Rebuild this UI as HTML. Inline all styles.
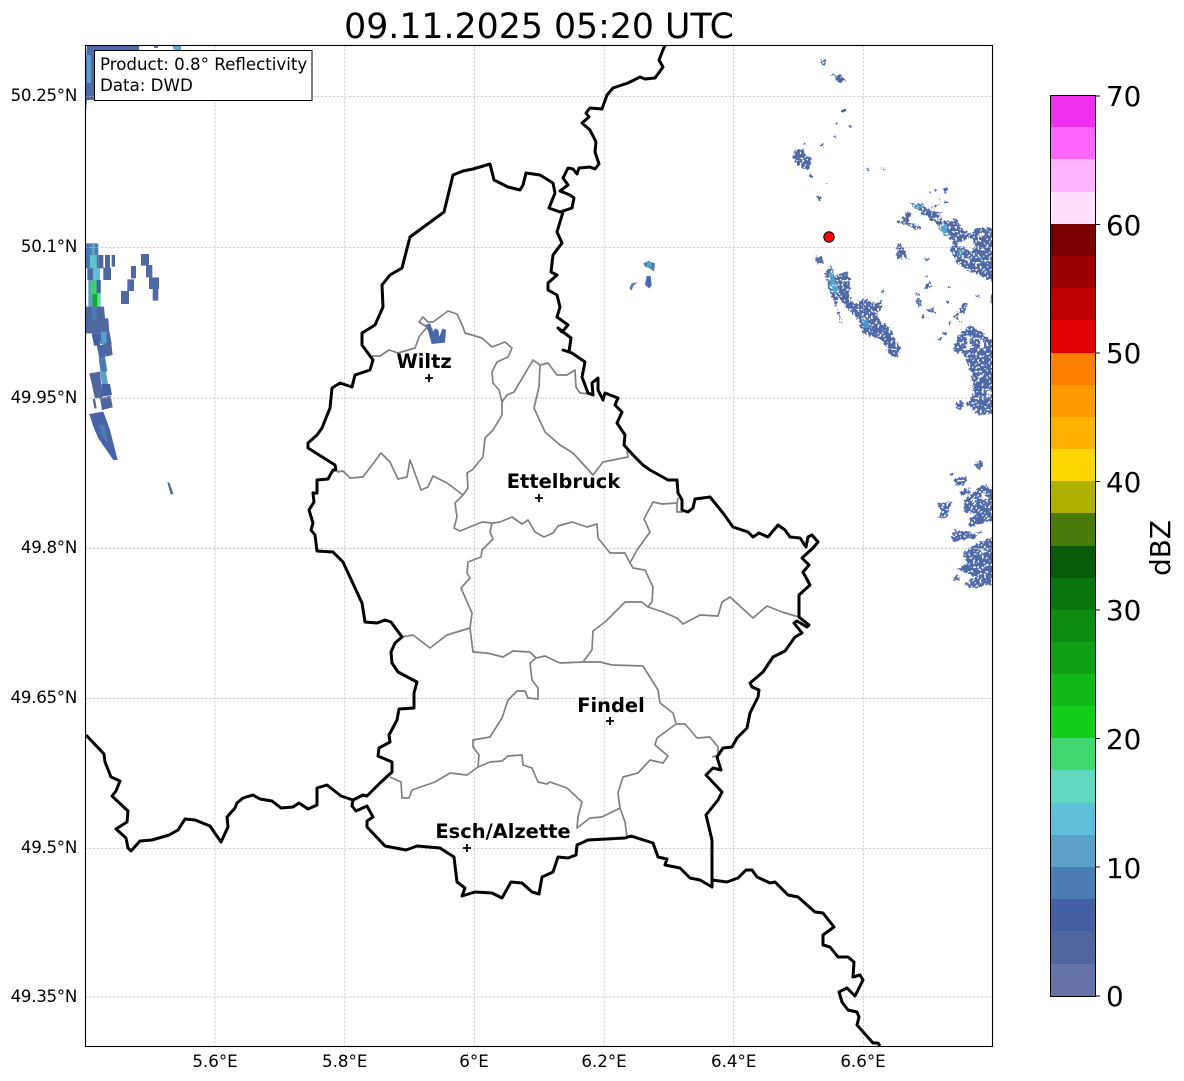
<!DOCTYPE html>
<html><head><meta charset="utf-8"><style>
html,body{margin:0;padding:0;background:#fff;width:1184px;height:1081px;overflow:hidden}
svg{display:block}
text{font-family:"DejaVu Sans",sans-serif;fill:#000}
.t{font-size:16.67px}
.y{letter-spacing:-.3px}
.c{font-size:27.78px}
.b{font-size:19.44px;font-weight:bold}
</style></head><body>
<svg width="1184" height="1081" viewBox="0 0 1184 1081" xmlns="http://www.w3.org/2000/svg">
<defs><clipPath id="ax"><rect x="85" y="45" width="907" height="1001"/></clipPath>
<filter id="rough" filterUnits="userSpaceOnUse" x="775" y="45" width="230" height="560" color-interpolation-filters="sRGB">
<feTurbulence type="fractalNoise" baseFrequency=".32" numOctaves="2" seed="4" result="n"/>
<feDisplacementMap in="SourceGraphic" in2="n" scale="6" xChannelSelector="R" yChannelSelector="G" result="d"/>
<feTurbulence type="fractalNoise" baseFrequency=".45" numOctaves="1" seed="9"/>
<feColorMatrix type="matrix" values="0 0 0 0 0 0 0 0 0 0 0 0 0 0 0 12 0 0 0 -4.2" result="m"/>
<feComposite in="d" in2="m" operator="in"/>
</filter></defs>
<rect width="1184" height="1081" fill="#fff"/>
<text x="539" y="38" font-size="34.72" text-anchor="middle">09.11.2025 05:20 UTC</text>

<g clip-path="url(#ax)">
<!-- radar: top-left -->
<path d="M87 45H139V50H96V100H87L86 111V60Z" fill="#4c6aa8"/>
<path d="M87 55h4v28h-4z" fill="#5ba0c8"/>
<path d="M172 45h9v5h-7z" fill="#5bb0c8"/><path d="M154 45h4v3h-4z" fill="#6474a8"/>

<!-- radar: left cluster -->
<g transform="translate(80 230) scale(.33333)">
<path d="M18 40H55V115H18Z" fill="#4a7cb4"/><path d="M30 75H50V115H30Z" fill="#5cc4cc"/><path d="M35 40h10v35h-10z" fill="#5ba0c8"/>
<path d="M55 75h15v40h-15zM75 75h15v40h-15zM95 75h10v35h-10z" fill="#50669f"/>
<path d="M22 115H40V150H22Z" fill="#4a6aa8"/><path d="M40 115H60V150H40Z" fill="#60c0dc"/>
<path d="M70 113H93V150H70Z" fill="#50669f"/>
<path d="M153 108h15v37h-15zM142 148h20v35h-20zM123 183h24v39h-24zM183 72h24v35h-24zM198 105h19v37h-19zM207 142h30v35h-30zM218 177h17v35h-17z" fill="#4f68a6"/>
<path d="M25 150H62V230H25Z" fill="#5ba0c8"/><path d="M32 152H50V195H32Z" fill="#40d070"/><path d="M38 192H52V230H38Z" fill="#10b018"/><path d="M50 150H62V190H50Z" fill="#4460a4"/><path d="M52 190H62V230H52Z" fill="#60d8c0"/>
<path d="M18 230H72L75 265H85L88 310H55L35 310H18Z" fill="#50669f"/><path d="M35 232H50V268H35Z" fill="#4a7cb4"/>
<path d="M35 310H60V347H42Z" fill="#4460a4"/><path d="M55 303H88L95 342H62Z" fill="#4a68a8"/><path d="M62 305H80V345H66Z" fill="#5ba0c8"/>
<path d="M50 345H75V385H58Z" fill="#4a68a8"/><path d="M72 340H94L98 375L76 380Z" fill="#50669f"/>
<path d="M56 385H76L82 425H62Z" fill="#4a7cb4"/>
<path d="M28 430L60 425L68 505H45Z" fill="#50669f"/>
<path d="M60 425H78L84 462H66Z" fill="#5ba0c8"/><path d="M65 462H90L96 495L65 500Z" fill="#4460a4"/>
<path d="M60 505L92 497L98 532L66 540Z" fill="#50669f"/><path d="M38 508L45 506L50 535H43Z" fill="#50669f"/>
<path d="M28 552L70 545L90 600L113 690H100L78 658L55 625L40 590Z" fill="#4864a6"/><path d="M55 585H73L85 640L70 625Z" fill="#4a7cb4"/>
<path d="M262 757H268L280 792L272 794Z" fill="#50669f"/>
</g>

<!-- radar: middle -->
<g transform="translate(300 160) scale(.33333)">
<path d="M375 495L390 490L400 515L405 505L415 510L418 530L428 505L438 510L435 548L395 552L385 515Z" fill="#4a68a8"/>
</g>
<g transform="translate(540 45) scale(.33333)">
<path d="M310 655L325 648L345 655L342 680L330 670L315 665Z" fill="#4a7cb4"/><path d="M320 652h15v15h-15z" fill="#5ba0c8"/>
<path d="M320 693H332L335 720L328 730L315 720Z" fill="#4a6aa8"/>
<path d="M268 730L275 715L293 712L280 722L275 737Z" fill="#5b75a8"/>
</g>

<!-- radar: east -->
<g filter="url(#rough)">
<g transform="translate(780 50) scale(.33333)" fill="#5069a5">
<path d="M120 30H138L136 48L128 46ZM155 67H165V78L185 72L190 85L198 92L180 98L165 92L165 78L155 75Z"/>
<path d="M186 178H195L193 188L186 186ZM165 216h6v6h-6zM208 228h6v6h-6zM162 256h6v8h-6zM72 280h5v5h-5zM117 277l8 6 3 8-7-4z"/>
<path d="M35 318L45 300L70 295L80 320L95 325L90 355L70 358L50 340Z"/>
<path d="M90 373H98L97 385H92ZM139 395l4 1-3 8-2-1zM112 437L122 440V455L115 452ZM255 352L267 355L263 362ZM303 352L315 356L310 360Z"/>
<path d="M393 462L425 460L445 478L485 490L470 505L510 515L525 505L548 540L575 548L590 535L640 530V695L620 685L585 670L560 660L530 640L510 600L520 575L500 560L470 520L430 495Z"/>
<path d="M352 512L370 500L380 483L395 490L385 515L405 520L425 535L405 538L385 525L355 520Z"/>
<path d="M447 425h6v6h-6zM465 418h8v7h-8zM490 415L505 410L500 430H490ZM475 443h7v6h-7zM490 450L505 458L495 462ZM455 468h10v5h-10zM466 462h10v5h-10z"/>
<path d="M350 595L360 580L372 600L388 628L365 622L355 632L350 620ZM432 625H447V630H432ZM437 675h6v6h-6zM435 715L448 690L456 705L448 715Z"/>
<path d="M505 708h8v8h-8zM408 728h7v7h-7zM408 750L420 745L426 768L415 770ZM440 780L460 770L465 790L445 785ZM422 798H440V805H422ZM498 750h8v8h-8zM588 733h10v10h-10zM632 735h6v25h-6z"/>
<path d="M520 800L540 775L550 757L565 765L555 785L535 795L530 810ZM503 816h9v7h-9zM488 845h10v8h-10zM475 862h10v10h-10z"/>
<path d="M520 890L540 850L570 825L580 850L610 845L615 885L640 870V965H570L550 910L525 905Z"/>
<path d="M105 620H125L128 640H110ZM148 645h4v20h-4z"/>
<path d="M135 670L150 650L165 680L178 670L200 665L212 690L205 740L225 760L250 745L290 760L305 750L308 770L290 790L305 820L330 830L345 870L362 895L355 925L335 920L305 870L250 850L235 810L195 770L178 745L170 770L180 790L190 810L178 815L170 770L150 730Z"/>
<path d="M303 718h9v10h-9z"/>
<g fill="#fff"><path d="M530 585L570 560L585 590L575 610L550 590ZM555 860L570 845L575 880L560 885ZM590 860H605L600 885H590ZM595 550h12v12h-12zM555 625h12v10h-12zM560 905h10v8h-10z"/></g>
<path d="M470 525L495 520L510 555L490 555ZM530 600H555L545 620ZM590 615L610 625L605 640ZM400 462h22l5 14-15 2zM140 670L155 665L180 720L165 735L150 710Z" fill="#5ba0c8"/>
<path d="M240 790L260 810L270 835L250 830Z" fill="#4a9cc8"/>
</g>
<g transform="translate(930 320) scale(.33333)" fill="#4f6aa8">
<path d="M70 80L100 30L125 15L165 50L195 60V280L150 285L110 255L130 220L125 180L120 100L90 100Z"/>
<path d="M75 250L95 240L100 260L85 270ZM25 52h10v10h-10zM40 35h10v10h-10zM54 5h8v8h-8zM88 0h8v8h-8z"/>
<path d="M130 435L150 420L162 440L145 450ZM60 460h12v8h-12zM70 475L110 470L112 485L80 500ZM88 515L115 505L120 520L100 530ZM100 540L130 520L150 500L165 495L195 510V600L120 620L115 600L140 580L100 575Z"/>
<path d="M20 548H68L55 570L50 595L25 592L35 575ZM60 650L75 630L130 640L160 630L130 655L70 665Z"/>
<path d="M100 700L130 675L195 650V790L130 805L100 795L140 770L80 750L110 730ZM70 770L85 765L88 780L72 782Z"/>
<g fill="#fff"><path d="M145 165h8v8h-8zM170 210h12v12h-12zM110 50h12v40h-12zM150 60h12v25h-12zM125 535h12v12h-12zM155 520h14v18h-14zM150 690h16v8h-16z"/></g>
</g>
</g>

<!-- grid -->
<g stroke="#bcbcbc" stroke-width=".7" stroke-dasharray="2.5 1.5" fill="none">
<path d="M215 45V1046M344.700 45V1046M474.400 45V1046M604.200 45V1046M733.700 45V1046M863.300 45V1046"/>
<path d="M85 96.700H992M85 247.300H992M85 398H992M85 548.400H992M85 698.600H992M85 848.700H992M85 997H992"/>
</g>

<!-- gray admin lines -->
<g fill="none" stroke="#808080" stroke-width="1.7" stroke-linejoin="round">
<path d="M372 356L380 356L389 350L398 353L415 348L419 337L427 327L419 322L423 317L428 322L433 322L448 311L457 314L463 327L465 333L482 338L492 347L505 342L512 348L508 357L497 362L492 372L493 383L499 390L502 402L502 415L493 430L485 438L483 457L472 470L467 473L468 488L463 495L455 503L457 517L454 528L460 531L482 522L493 523L500 522L512 517L522 524L528 520L535 532L544 537L553 533L558 526L572 522L587 527L597 524L598 538L610 553L625 553L630 563L633 568L645 570L653 587L652 602L648 607"/>
<path d="M337 472L343 471L350 478L363 477L381 453L390 462L398 479L407 477L410 460L413 468L421 490L428 487L433 476L447 483L463 495"/>
<path d="M502 402L507 395L514 392L533 360L540 365L548 363L557 375L567 375L575 370L576 387L580 393L590 394"/>
<path d="M540 365L539 387L534 408L545 432L560 445L573 453L593 475L603 462L628 457L627 450"/>
<path d="M630 563L637 550L650 532L644 519L653 502L662 504L677 503L678 498M677 503L677 512L683 512"/>
<path d="M583 662L592 650L593 631L605 622L625 602L642 602L648 607L663 612L677 618L683 624L700 615L718 616L722 602L730 597L753 618L767 606L782 612L799 617"/>
<path d="M492 523L490 532L493 539L482 550L481 557L468 562L467 573L470 578L461 588L472 613L470 628L473 652L487 653L503 657L513 651L530 652L536 658L545 656L560 663L583 662L600 662L612 665L643 666L658 690L660 703L673 713L676 723"/>
<path d="M470 628L447 635L430 648L413 635L402 637"/>
<path d="M536 658L530 663L532 680L538 688L538 699L528 698L525 691L517 691L508 700L502 718L490 737L473 740L473 747L479 755L478 767L490 762L502 761L508 756L522 755L523 765L532 768L538 782L547 784L550 782L567 788L582 802L578 817L577 828L590 818L602 817L620 808L625 822L627 837"/>
<path d="M620 808L618 793L623 777L638 773L650 760L663 763L668 756L655 745L657 738L676 724L685 724L697 738L710 737L718 747L718 755L712 757"/>
<path d="M478 767L467 775L450 773L435 782L412 790L409 798L402 798L401 782L390 777"/>
</g>

<!-- black borders -->
<g fill="none" stroke="#000" stroke-width="3" stroke-linejoin="round">
<path d="M86 735L104 754L105 762L111 777L120 781L116 791L112 796L128 811L127 822L116 829L126 838L128 848L131 851L140 841L152 840L169 835L178 830L185 819L195 820L210 826L221 842L228 827L227 817L235 808L237 803L243 798L253 795L260 799L272 801L281 808L293 807L299 803L308 809L317 805L317 788L327 785L341 796L353 800L352 806L356 811L367 806L373 817L367 821L367 827L385 846L406 850L417 846L440 848L454 857L457 882L465 888L462 896L475 892L492 893L502 898L511 882L522 883L532 892L539 894L542 877L553 872L558 857L568 858L576 855L577 845L588 840L625 838L631 836L653 843L658 857L667 859L665 865L680 868L690 878L700 880L712 887L712 840L706 815L718 800L722 792L706 775L713 768L721 770L717 757L723 748L732 747L737 738L747 728L750 713L758 697L759 690L752 687L750 683L763 672L773 657L785 651L795 637L802 633L794 623L797 621L807 627L809 625L799 617L799 595L810 585L803 572L809 565L802 558L813 548L818 542L812 535L808 537L806 547L800 538L790 537L785 530L778 525L768 537L759 533L753 537L748 532L733 527L723 513L710 497L695 499L693 508L688 512L682 510L682 500L678 493L677 480L668 480L650 470L643 465L633 455L624 445L625 435L617 423L622 412L615 405L618 398L605 393L603 400L598 390L598 378L592 383L593 395L588 393L582 377L585 362L572 353L563 350L569 352L571 338L558 328L562 332L568 325L557 317L560 307L557 295L548 290L548 283L557 275L551 272L553 255L562 243L557 232L563 212"/>
<path d="M353 800L363 795L367 796L380 783L392 772L392 762L378 756L379 748L390 742L389 735L397 720L399 709L414 708L414 693L417 682L398 672L392 663L391 652L395 643L402 637L391 622L385 620L377 623L365 622L362 603L343 562L333 552L317 551L315 535L311 530L313 523L309 510L314 502L313 493L317 493L317 480L328 479L333 470L336 470L335 465L308 448L308 443L317 435L322 428L330 408L332 388L340 383L352 387L355 375L370 370L373 360L362 345L362 333L375 325L383 307L382 285L390 275L402 268L410 237L444 212L453 175L463 171L473 169L490 164L494 180L508 187L520 190L523 185L526 173L540 175L553 183L555 193L549 208L560 212L572 208L574 198L570 195L560 191L568 185L563 178L568 168L573 169L577 174L579 168L590 167L595 169L599 164L595 152L596 142L590 130L582 123L589 117L586 113L590 108L602 109L607 95L613 88L628 83L640 77L645 79L655 78L663 67L659 60L665 45"/>
<path d="M712 880L727 882L738 878L746 870L752 870L757 877L770 883L775 882L788 895L798 897L815 912L823 913L834 927L823 935L823 945L830 947L838 957L848 957L854 962L853 977L860 975L863 980L855 996L847 988L839 992L842 1002L848 1010L857 1012L859 1017L857 1025L873 1043L878 1043L880 1046"/>
</g>

<!-- city markers -->
<g stroke="#000" stroke-width="1.8" fill="none">
<path d="M425 378H433M429 374V382"/><path d="M535 498H543M539 494V502"/><path d="M606 721H614M610 717V725"/><path d="M463 848H471M467 844V852"/>
</g>
<circle cx="829" cy="237" r="5.2" fill="#ff0000" stroke="#000" stroke-width="1"/>
<text class="b" x="424" y="368" text-anchor="middle">Wiltz</text>
<text class="b" x="563.5" y="488" text-anchor="middle">Ettelbruck</text>
<text class="b" x="611" y="712" text-anchor="middle">Findel</text>
<text class="b" x="503" y="838" text-anchor="middle">Esch/Alzette</text>
</g>

<rect x="94.5" y="50.5" width="217.5" height="50" fill="#fff" stroke="#000" stroke-width="1"/>
<text class="t" x="100" y="70">Product: 0.8° Reflectivity</text>
<text class="t" x="100" y="91">Data: DWD</text>

<rect x="85.5" y="45.5" width="907" height="1001" fill="none" stroke="#000" stroke-width="1.1"/>

<!-- axis labels -->
<g class="t" text-anchor="middle">
<text x="215" y="1067">5.6°E</text><text x="344.700" y="1067">5.8°E</text><text x="474" y="1067">6°E</text><text x="604" y="1067">6.2°E</text><text x="733.700" y="1067">6.4°E</text><text x="863" y="1067">6.6°E</text>
</g>
<g class="t y" text-anchor="end">
<text x="77" y="101">50.25°N</text><text x="77" y="252">50.1°N</text><text x="77" y="403">49.95°N</text><text x="77" y="553">49.8°N</text><text x="77" y="703">49.65°N</text><text x="77" y="853">49.5°N</text><text x="77" y="1002">49.35°N</text>
</g>

<!-- colorbar -->
<g shape-rendering="crispEdges">
<rect x="1051" y="96" width="44" height="32" fill="#ee2fee"/>
<rect x="1051" y="127" width="44" height="33" fill="#ff66ff"/>
<rect x="1051" y="159" width="44" height="33" fill="#ffb3ff"/>
<rect x="1051" y="192" width="44" height="32" fill="#ffe0ff"/>
<rect x="1051" y="224" width="44" height="32" fill="#7a0000"/>
<rect x="1051" y="256" width="44" height="32" fill="#9a0000"/>
<rect x="1051" y="288" width="44" height="32" fill="#be0000"/>
<rect x="1051" y="320" width="44" height="33" fill="#e30000"/>
<rect x="1051" y="353" width="44" height="32" fill="#ff7f00"/>
<rect x="1051" y="385" width="44" height="32" fill="#ff9900"/>
<rect x="1051" y="417" width="44" height="32" fill="#ffb300"/>
<rect x="1051" y="449" width="44" height="32" fill="#ffd700"/>
<rect x="1051" y="481" width="44" height="32" fill="#b0b000"/>
<rect x="1051" y="513" width="44" height="33" fill="#4a7a0a"/>
<rect x="1051" y="546" width="44" height="32" fill="#075a0a"/>
<rect x="1051" y="578" width="44" height="32" fill="#0a750f"/>
<rect x="1051" y="610" width="44" height="32" fill="#0e8c12"/>
<rect x="1051" y="642" width="44" height="32" fill="#10a015"/>
<rect x="1051" y="674" width="44" height="33" fill="#12b818"/>
<rect x="1051" y="706" width="44" height="32" fill="#14cc1a"/>
<rect x="1051" y="738" width="44" height="32" fill="#40d870"/>
<rect x="1051" y="770" width="44" height="33" fill="#60d8c0"/>
<rect x="1051" y="803" width="44" height="32" fill="#60c0dc"/>
<rect x="1051" y="835" width="44" height="32" fill="#5ba0c8"/>
<rect x="1051" y="867" width="44" height="32" fill="#4a7cb4"/>
<rect x="1051" y="899" width="44" height="32" fill="#4460a4"/>
<rect x="1051" y="931" width="44" height="33" fill="#50669f"/>
<rect x="1051" y="964" width="44" height="32" fill="#6474a8"/>
<rect x="1050.500" y="95.500" width="45" height="901" fill="none" stroke="#000" stroke-width="1"/>
<path d="M1095 96H1100M1095 224.500H1100M1095 353H1100M1095 481.500H1100M1095 610H1100M1095 738.500H1100M1095 867H1100M1095 996H1100" stroke="#000" stroke-width="1"/>
</g>
<g class="c">
<text x="1106" y="106">70</text><text x="1106" y="235">60</text><text x="1106" y="363">50</text><text x="1106" y="492">40</text><text x="1106" y="620">30</text><text x="1106" y="749">20</text><text x="1106" y="878">10</text><text x="1106" y="1006">0</text>
</g>
<text class="c" transform="translate(1170 548) rotate(-90)" text-anchor="middle">dBZ</text>
</svg>
</body></html>
